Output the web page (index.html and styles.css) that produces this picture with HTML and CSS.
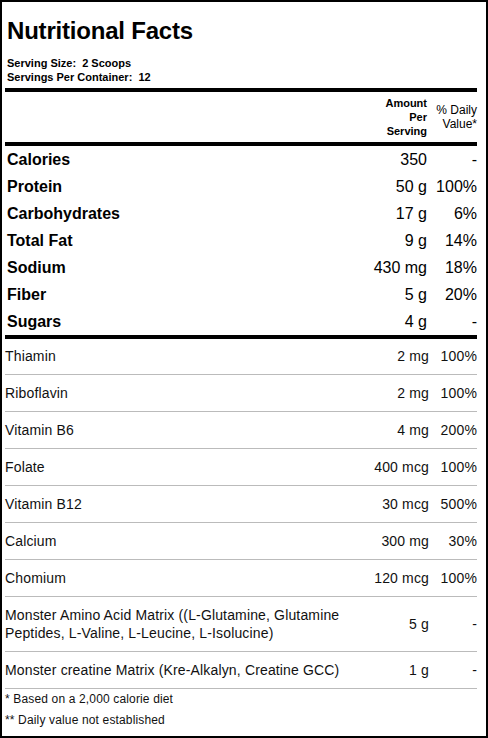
FILE: index.html
```html
<!DOCTYPE html>
<html lang="en">

<head>
    <meta charset="UTF-8">
    <meta name="viewport" content="width=device-width, initial-scale=1.0">
    <title>Nutritional Facts</title>
    <link rel="stylesheet" href="styles.css">
</head>

<body>

    <div class="label">
        <div class="label-head">
            <h1>Nutritional Facts</h1>
            <div class="serving">Serving Size:&nbsp; 2 Scoops</div>
            <div class="serving">Servings Per Container:&nbsp; 12</div>
        </div>

        <div class="main-table">
            <div class="col-head"></div>
            <div class="col-head amount-head">Amount<br>Per<br>Serving</div>
            <div class="col-head daily-head">% Daily<br>Value*</div>

            <div class="main-name">Calories</div>
            <div class="main-amount">350</div>
            <div class="main-pct">-</div>

            <div class="main-name">Protein</div>
            <div class="main-amount">50 g</div>
            <div class="main-pct">100%</div>

            <div class="main-name">Carbohydrates</div>
            <div class="main-amount">17 g</div>
            <div class="main-pct">6%</div>

            <div class="main-name">Total Fat</div>
            <div class="main-amount">9 g</div>
            <div class="main-pct">14%</div>

            <div class="main-name">Sodium</div>
            <div class="main-amount">430 mg</div>
            <div class="main-pct">18%</div>

            <div class="main-name">Fiber</div>
            <div class="main-amount">5 g</div>
            <div class="main-pct">20%</div>

            <div class="main-name">Sugars</div>
            <div class="main-amount">4 g</div>
            <div class="main-pct">-</div>
        </div>

        <div class="sub-table">
            <div class="sub-row">
                <div class="sub-name">Thiamin</div>
                <div class="sub-amount">2 mg</div>
                <div class="sub-pct">100%</div>
            </div>
            <div class="sub-row">
                <div class="sub-name">Riboflavin</div>
                <div class="sub-amount">2 mg</div>
                <div class="sub-pct">100%</div>
            </div>
            <div class="sub-row">
                <div class="sub-name">Vitamin B6</div>
                <div class="sub-amount">4 mg</div>
                <div class="sub-pct">200%</div>
            </div>
            <div class="sub-row">
                <div class="sub-name">Folate</div>
                <div class="sub-amount">400 mcg</div>
                <div class="sub-pct">100%</div>
            </div>
            <div class="sub-row">
                <div class="sub-name">Vitamin B12</div>
                <div class="sub-amount">30 mcg</div>
                <div class="sub-pct">500%</div>
            </div>
            <div class="sub-row">
                <div class="sub-name">Calcium</div>
                <div class="sub-amount">300 mg</div>
                <div class="sub-pct">30%</div>
            </div>
            <div class="sub-row">
                <div class="sub-name">Chomium</div>
                <div class="sub-amount">120 mcg</div>
                <div class="sub-pct">100%</div>
            </div>
            <div class="sub-row">
                <div class="sub-name">Monster Amino Acid Matrix ((L-Glutamine, Glutamine Peptides, L-Valine, L-Leucine, L-Isolucine)</div>
                <div class="sub-amount">5 g</div>
                <div class="sub-pct">-</div>
            </div>
            <div class="sub-row">
                <div class="sub-name">Monster creatine Matrix (Kre-Alkalyn, Creatine GCC)</div>
                <div class="sub-amount">1 g</div>
                <div class="sub-pct">-</div>
            </div>
        </div>

        <div class="notes">
            <p>* Based on a 2,000 calorie diet</p>
            <p>** Daily value not established</p>
        </div>
    </div>

</body>

</html>
```

FILE: styles.css
```css
body {
    margin: 0;
    background: white;
    color: #000;
    font-family: "Liberation Sans", Arial, sans-serif;
}

.label {
    box-sizing: border-box;
    width: 100%;
    min-height: 738px;
    border: 2px solid #000;
    padding: 0 9px 0 3px;
}

.label-head {
    padding: 15px 0 4px 2px;
    border-bottom: 4px solid #000;
}

h1 {
    margin: 0 0 11px;
    font-size: 24px;
    line-height: 28px;
    font-weight: bold;
    letter-spacing: -0.2px;
}

.serving {
    font-size: 11px;
    line-height: 14px;
    font-weight: bold;
}

.main-table {
    display: grid;
    grid-template-columns: 1fr 80px 50px;
    border-bottom: 4px solid #000;
}

.col-head {
    height: 50px;
    border-bottom: 4px solid #000;
    font-size: 11px;
    line-height: 14px;
    text-align: right;
    display: flex;
    flex-direction: column;
    justify-content: center;
    align-items: flex-end;
}

.amount-head {
    font-weight: bold;
}

.daily-head {
    font-size: 12px;
}

.main-name,
.main-amount,
.main-pct {
    font-size: 16px;
    line-height: 27px;
}

.main-name {
    font-weight: bold;
    padding-left: 2px;
}

.main-amount,
.main-pct {
    text-align: right;
}

.sub-table {
    padding-top: 1px;
}

.sub-row {
    display: grid;
    grid-template-columns: 1fr 80px 48px;
    align-items: center;
    padding: 9px 0;
    border-bottom: 1px solid #bbb;
    font-size: 14px;
    line-height: 18px;
    letter-spacing: 0.15px;
    color: #111;
}

.sub-row:first-child {
    padding-top: 7px;
}

.sub-amount,
.sub-pct {
    text-align: right;
}

.notes p {
    margin: 0;
    font-size: 12px;
    line-height: 21px;
    letter-spacing: 0.15px;
    color: #111;
}
```
